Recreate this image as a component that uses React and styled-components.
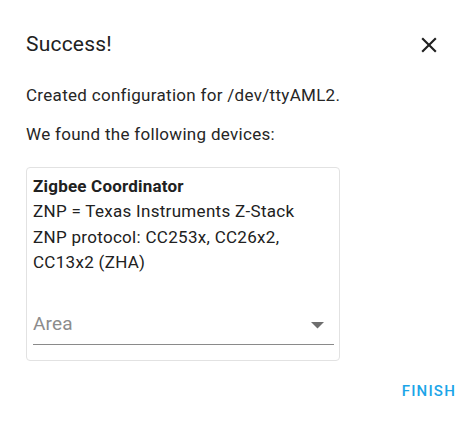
import React from "react";
import styled, { createGlobalStyle } from "styled-components";

const GlobalStyle = createGlobalStyle`
  html, body {
    margin: 0;
    padding: 0;
    background: #fff;
    font-family: Roboto, "Noto Sans", sans-serif;
    -webkit-font-smoothing: antialiased;
  }
`;

const Dialog = styled.div`
  width: 472px;
  height: 422px;
  box-sizing: border-box;
  padding: 24px 16px 0 26px;
  display: flex;
  flex-direction: column;
  color: #212121;
`;

const Header = styled.div`
  display: flex;
  align-items: center;
  justify-content: space-between;
  height: 40px;
`;

const Title = styled.h2`
  margin: 0;
  font-size: 21px;
  line-height: 26px;
  font-weight: 400;
  letter-spacing: 0.2px;
`;

const CloseButton = styled.button`
  border: none;
  background: none;
  padding: 0;
  width: 26px;
  height: 26px;
  margin: 2px 14px 0 0;
  display: flex;
  align-items: center;
  justify-content: center;
  color: #212121;
  cursor: pointer;
`;

const Paragraph = styled.p`
  margin: ${({ $top }) => $top}px 0 0;
  font-size: 17px;
  line-height: 25px;
  letter-spacing: 0.3px;
  color: #262626;
`;

const Card = styled.div`
  margin-top: 20px;
  width: 314px;
  height: 194px;
  box-sizing: border-box;
  border: 1px solid #e2e2e2;
  border-radius: 4px;
  padding: 6px 5px 0 6px;
  display: flex;
  flex-direction: column;
`;

const DeviceName = styled.div`
  font-weight: 700;
  font-size: 17px;
  line-height: 25.4px;
  letter-spacing: 0.2px;
`;

const DeviceLine = styled.div`
  font-size: 17px;
  line-height: 25.4px;
  letter-spacing: 0.3px;
`;

const Select = styled.div`
  margin-top: 13px;
  height: 56px;
  border-bottom: 1px solid #8a8a8a;
  display: flex;
  align-items: flex-end;
  justify-content: space-between;
  padding: 0 10px 9px 0;
  box-sizing: border-box;
`;

const Label = styled.span`
  font-size: 19px;
  line-height: 22px;
  letter-spacing: 0.2px;
  color: #8c8c8c;
`;

const Arrow = styled.svg`
  margin-bottom: 6px;
`;

const Footer = styled.div`
  display: flex;
  justify-content: flex-end;
  margin-top: 20px;
`;

const TextButton = styled.button`
  border: none;
  background: none;
  font-family: inherit;
  font-size: 15px;
  line-height: 20px;
  font-weight: 500;
  letter-spacing: 1.2px;
  color: #1ba5e8;
  padding: 0;
  cursor: pointer;
`;

export default function App() {
  return (
    <>
      <GlobalStyle />
      <Dialog>
        <Header>
          <Title>Success!</Title>
          <CloseButton aria-label="Close">
            <svg width="26" height="26" viewBox="0 0 24 24">
              <path
                fill="currentColor"
                d="M19,6.41L17.59,5L12,10.59L6.41,5L5,6.41L10.59,12L5,17.59L6.41,19L12,13.41L17.59,19L19,17.59L13.41,12L19,6.41Z"
              />
            </svg>
          </CloseButton>
        </Header>
        <Paragraph $top={19}>Created configuration for /dev/ttyAML2.</Paragraph>
        <Paragraph $top={14}>We found the following devices:</Paragraph>
        <Card>
          <DeviceName>Zigbee Coordinator</DeviceName>
          <DeviceLine>ZNP = Texas Instruments Z-Stack</DeviceLine>
          <DeviceLine>ZNP protocol: CC253x, CC26x2,</DeviceLine>
          <DeviceLine>CC13x2 (ZHA)</DeviceLine>
          <Select>
            <Label>Area</Label>
            <Arrow width="13" height="6.5" viewBox="0 0 10 5">
              <path fill="#6e6e6e" d="M0 0 L10 0 L5 5 Z" />
            </Arrow>
          </Select>
        </Card>
        <Footer>
          <TextButton>FINISH</TextButton>
        </Footer>
      </Dialog>
    </>
  );
}
